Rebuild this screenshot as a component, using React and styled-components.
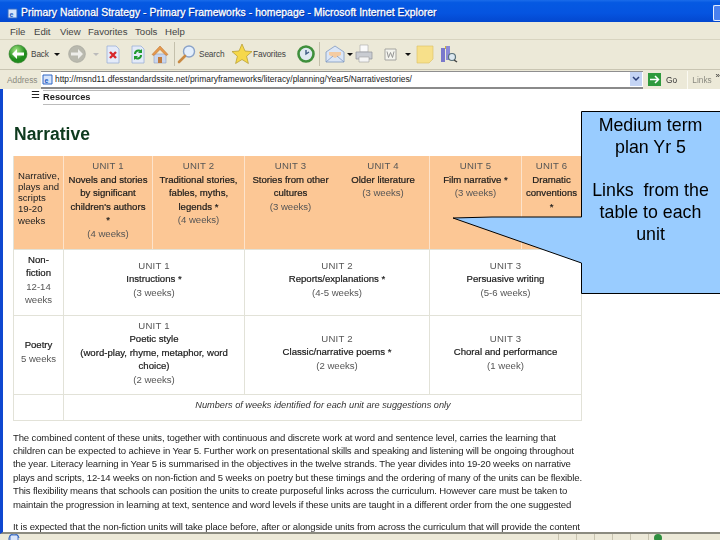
import React from 'react';
import styled, { createGlobalStyle } from 'styled-components';

const Global = createGlobalStyle`
  html, body { margin: 0; padding: 0; background: #fff; }
  body { width: 720px; height: 540px; overflow: hidden; font-family: "Liberation Sans", Arial, sans-serif; }
`;
const Stage = styled.div`position: relative; width: 720px; height: 540px; overflow: hidden;`;
const Browser = styled.div`
  width: 720px; height: 540px; display: flex; flex-direction: column;
  background: #ece9d8; filter: blur(0.45px);
`;
const TitleBar = styled.div`
  height: 22px; flex: none; box-sizing: border-box; display: flex; align-items: center; gap: 2px; padding: 3px 0 0 7px;
  background: linear-gradient(#1a6cea 0, #0559e2 12%, #0554e0 60%, #0347cf 100%);
  color: #fff; font-size: 10.4px; letter-spacing: 0.03px; white-space: nowrap;
`;
const TitleText = styled.span`flex: 1; text-shadow: 1px 1px 0 #0a2f9a; -webkit-text-stroke: 0.3px #fff;`;
const CloseEdge = styled.span`width: 6px; height: 14px; background: #4a80ee; border: 1px solid #e6eefc; border-right: 0; border-radius: 2px 0 0 2px;`;
const MenuBar = styled.div`
  height: 18px; flex: none; display: flex; align-items: center; color: #444; font-size: 9.6px; padding-top: 1px;
  border-bottom: 1px solid #d8d4c0; box-sizing: border-box;
`;
const MenuItem = styled.span`width: ${p => p.$w}px; flex: none; &:first-child { margin-left: 10px; }`;
const Toolbar = styled.div`
  height: 30px; flex: none; display: flex; align-items: center; color: #444; font-size: 8.3px;
  border-bottom: 1px solid #c9c5b2; box-sizing: border-box; padding: 0 0 1px 7px;
`;
const Tool = styled.span`display: inline-flex; align-items: center; flex: none; margin-left: ${p => p.$ml || 0}px; white-space: nowrap; gap: ${p => p.$gap || 0}px;`;
const ToolText = styled.span`width: ${p => p.$w}px; flex: none; letter-spacing: -0.15px;`;
const Sep = styled.span`width: 1px; height: 24px; background: #c4c0ac; flex: none; margin-left: ${p => p.$ml || 0}px;`;
const Caret = styled.span`
  width: 0; height: 0; flex: none; margin-left: ${p => p.$ml || 0}px;
  border-left: 3px solid transparent; border-right: 3px solid transparent; border-top: 3px solid ${p => p.$c || '#111'};
`;
const AddressBar = styled.div`
  height: 19px; flex: none; display: flex; align-items: center; font-size: 8.3px; color: #8a8a80;
  box-sizing: border-box; padding-left: 7px;
`;
const AddressLabel = styled.span`width: 34px; flex: none;`;
const UrlField = styled.div`
  width: 602px; height: 18px; flex: none; background: #fff; box-sizing: border-box; display: flex; align-items: center;
  border-top: 1px solid #8f8f8f; border-bottom: 2px solid #8a8a8a; padding: 0 1px 0 1px; color: #222; font-size: 8.42px;
`;
const UrlText = styled.span`flex: 1; white-space: nowrap; overflow: hidden; margin-left: 1px;`;
const DropBox = styled.span`width: 12px; height: 14px; background: #c4d4f4; flex: none; display: flex; align-items: center; justify-content: center;`;
const GoLabel = styled.span`color: #333; margin-left: 5px; width: 23px;`;
const BarDivider = styled.span`width: 1px; height: 18px; background: #fbfaf2; flex: none;`;
const LinksLabel = styled.span`margin-left: 4px; width: 25px;`;
const Chevron = styled.span`color: #222; font-size: 8px; margin-top: -8px;`;

const Content = styled.main`
  flex: 1; min-height: 0; overflow: hidden; background: #fff; color: #1c1c1c; font-size: 9.6px;
  border-left: 3px solid #0f47d0; box-sizing: border-box; padding: 1px 0 0 10px;
  border-bottom: 2px solid #8b8b80;
`;
const ResourceRow = styled.div`display: flex; align-items: flex-start; margin-left: 18px;`;
const MenuGlyph = styled.span`font-size: 10px; line-height: 9px; width: 12px; color: #222;`;
const ResourceBox = styled.div`
  width: 147px; height: 13px; border-top: 1px solid #bbb; border-bottom: 1px solid #bbb;
  font-size: 9.3px; font-weight: 700; line-height: 13px; color: #222;
`;
const Heading = styled.h1`
  margin: 19px 0 12px 1px; font-size: 17.5px; line-height: 20px; font-weight: 700; color: #0e3a1e;
`;
const Table = styled.table`
  border-collapse: collapse; table-layout: fixed; width: 568px; height: 264px; font-size: 9.6px; line-height: 13.5px;
  border-bottom: 1px solid #b5b5ad;
`;
const Cell = styled.td`
  box-sizing: border-box; padding: ${p => p.$pad ?? '3px 1px 0'}; text-align: ${p => p.$left ? 'left' : 'center'};
  vertical-align: ${p => p.$mid ? 'middle' : 'top'}; color: #222;
  background: ${p => p.$head ? '#fcc795' : '#fff'};
  line-height: ${p => p.$tight ? '11.3px' : 'inherit'};
  border-right: 1px solid ${p => p.$noline ? (p.$head ? '#fcc795' : '#fff') : (p.$head ? '#fde3cb' : '#e2e2d8')};
  border-bottom: 1px solid #e2e2d8;
  &:first-child { border-left: 1px solid #e2e2d8; }
`;
const Unit = styled.span`display: block; color: #555; letter-spacing: 0.2px;`;
const Topic = styled.span`display: block; color: #1a1a1a; -webkit-text-stroke: 0.2px #1a1a1a;`;
const Weeks = styled.span`display: block; color: #555;`;
const Note = styled.span`font-style: italic; color: #333; font-size: 9.2px;`;
const Para = styled.p`margin: 10px 0 0 0; width: 570px; font-size: 9.55px; letter-spacing: -0.14px; line-height: 13.4px; white-space: nowrap; color: #1e1e1e;`;
const NextPara = styled(Para)`margin-top: 9px;`;
const StatusBar = styled.div`
  height: 6px; flex: none; display: flex; background: #ece9d8; padding: 0 0 0 8px; overflow: hidden;
`;
const StatusPanes = styled.div`display: flex; margin-left: 538px;`;
const StatusPane = styled.span`width: 17px; height: 6px; border-left: 1px solid #c8c4b0; flex: none; display: flex; justify-content: center;`;
const Globe = styled.span`width: 8px; height: 8px; border-radius: 50%; background: #2f8f3f; flex: none;`;

const Callout = styled.aside`position: absolute; left: 453px; top: 111px; width: 267px; height: 183px;`;
const CalloutShape = styled.svg`display: block; position: absolute; inset: 0;`;
const CalloutText = styled.div`
  position: absolute; left: 128px; right: 0; top: 4px; text-align: center; color: #000;
  font-size: 17.8px; line-height: 21.7px;
`;

const I = ({ w = 22, h = 22, children }) => <svg width={w} height={h} viewBox="0 0 22 22">{children}</svg>;
const BackIcon = () => <I><defs><radialGradient id="g1" cx=".4" cy=".3"><stop offset="0" stopColor="#a4e684" /><stop offset="1" stopColor="#1f8c1c" /></radialGradient></defs><circle cx="11" cy="11" r="9" fill="url(#g1)" stroke="#2f7a28" strokeWidth=".6" /><path d="M5 11l5-5v3.500h7v3h-7V16z" fill="#fff" /></I>;
const ForwardIcon = () => <I><circle cx="11" cy="11" r="8.400" fill="#b9b9ae" stroke="#a2a29a" strokeWidth=".6" /><path d="M17 11l-5-5v3.500H5v3h7V16z" fill="#eeeeea" /></I>;
const StopIcon = () => <I><path d="M5 3h9l3 3v14H5z" fill="#e4ebf9" stroke="#9cb0d8" strokeWidth=".8" /><path d="M8 9l6 6m0-6l-6 6" stroke="#d8262a" strokeWidth="2.400" /></I>;
const RefreshIcon = () => <I><path d="M5 3h9l3 3v14H5z" fill="#e4ebf9" stroke="#9cb0d8" strokeWidth=".8" /><path d="M8 11a3.500 3.500 0 016-2.500M14 12a3.500 3.500 0 01-6 2.500" fill="none" stroke="#1f9a2f" strokeWidth="2" /><path d="M15 6v4h-4zM7 17v-4h4z" fill="#1f9a2f" /></I>;
const HomeIcon = () => <I><path d="M5 11h12v9H5z" fill="#c9d6ee" stroke="#8ea0c4" strokeWidth=".6" /><path d="M3 11.500L11 3l8 8.500-2 1-6-6-6 6z" fill="#e59a4c" stroke="#b9682a" strokeWidth=".5" /><path d="M9 14h4v6H9z" fill="#c07a3e" /></I>;
const SearchIcon = () => <I><circle cx="13" cy="8.500" r="5.500" fill="#e4effc" stroke="#8aa2c8" strokeWidth="1.400" /><path d="M9 13l-6 6" stroke="#c98a44" strokeWidth="2.600" strokeLinecap="round" /></I>;
const StarIcon = () => <I><path d="M11 1l3 7 7 .6-5.400 4.600 1.800 7.300L11 16.500l-6.400 4 1.800-7.300L1 8.600l7-.6z" fill="#f6d84a" stroke="#b39a2c" strokeWidth=".7" /></I>;
const HistoryIcon = () => <I><circle cx="11" cy="11" r="7.500" fill="#dfe9f2" stroke="#3f8f3c" strokeWidth="2.600" /><path d="M11 7v4l3-2" fill="none" stroke="#3c5a86" strokeWidth="1.400" /></I>;
const MailIcon = () => <I><path d="M2 9l9-6 9 6v10H2z" fill="#dbe6f6" stroke="#7f98c2" strokeWidth=".8" /><path d="M5 9h12v3l-6 3-6-3z" fill="#f4cba2" /><path d="M2 19l7-6M20 19l-7-6" stroke="#7f98c2" strokeWidth=".8" /></I>;
const PrintIcon = () => <I><path d="M7 2h8v7H7z" fill="#fafafa" stroke="#aaa" strokeWidth=".6" /><path d="M3 9h16v7H3z" fill="#c9ccd2" stroke="#8f939c" strokeWidth=".7" /><path d="M6 14h10v5H6z" fill="#f5f5f5" stroke="#a0a0a0" strokeWidth=".6" /></I>;
const WordIcon = () => <I><path d="M5 6h11v11H5z" fill="#f4f4ee" stroke="#a4a4a0" strokeWidth="1" /><path d="M7 8.500l1.500 6 2-5 2 5 1.500-6" fill="none" stroke="#8c8c8c" strokeWidth=".9" /></I>;
const NoteIcon = () => <I><path d="M3 3h16v13l-4 4H3z" fill="#f7e08a" stroke="#dcc062" strokeWidth=".6" /></I>;
const BooksIcon = () => <I><path d="M4 5h4v14H4z" fill="#7a78cc" /><path d="M9 3h4v14H9z" fill="#8c8ad6" /><path d="M8 3h1v3H8z" fill="#cdb23c" /><circle cx="15" cy="14" r="3.500" fill="#dce8f0" stroke="#59717a" strokeWidth="1.200" /><path d="M17 17l3 2" stroke="#444" strokeWidth="1.500" /></I>;
const PageIcon = () => <svg width="12" height="12" viewBox="0 0 12 12"><path d="M2 1h8v10H2z" fill="#dbe6fb" stroke="#4c77c8" /><path d="M1 6a5 5 0 0110-2" fill="none" stroke="#2d63c0" /></svg>;
const GoIcon = () => <svg width="13" height="13" viewBox="0 0 13 13"><rect width="13" height="13" fill="#2f9a3d" /><path d="M2 6.500h8M7 3l3.500 3.500L7 10" fill="none" stroke="#fff" strokeWidth="1.500" /></svg>;
const IeGlyph = () => <svg width="12" height="12" viewBox="0 0 12 12"><path d="M1 2h9v9H1z" fill="#d6e4fb" stroke="#2f66c4" /><text x="2.500" y="9.500" fontSize="7" fontWeight="700" fill="#205bc0" fontFamily="Liberation Sans">e</text></svg>;
const DropArrow = () => <svg width="8" height="6" viewBox="0 0 8 6"><path d="M1 1l3 3 3-3" fill="none" stroke="#2a3f78" strokeWidth="1.500" /></svg>;

const U = ({ unit, topic, weeks, star }) => (
  <>
    <Unit>{unit}</Unit>
    {topic.map(t => <Topic key={t}>{t}</Topic>)}
    {star && <Topic>*</Topic>}
    {weeks && <Weeks>{weeks}</Weeks>}
  </>
);

export default function App() {
  return (
    <Stage>
      <Global />
      <Browser>
        <TitleBar>
          <IeGlyph />
          <TitleText>Primary National Strategy - Primary Frameworks - homepage - Microsoft Internet Explorer</TitleText>
          <CloseEdge />
        </TitleBar>
        <MenuBar>
          <MenuItem $w={24}>File</MenuItem><MenuItem $w={26}>Edit</MenuItem><MenuItem $w={28}>View</MenuItem>
          <MenuItem $w={47}>Favorites</MenuItem><MenuItem $w={30}>Tools</MenuItem><MenuItem $w={30}>Help</MenuItem>
        </MenuBar>
        <Toolbar>
          <Tool $gap={2}><BackIcon /><ToolText $w={16}>Back</ToolText></Tool>
          <Caret $ml={7} />
          <Tool $ml={6}><ForwardIcon /></Tool>
          <Caret $ml={5} $c="#bbb" />
          <Tool $ml={3}><StopIcon /></Tool>
          <Tool $ml={3}><RefreshIcon /></Tool>
          <Tool><HomeIcon /></Tool>
          <Sep $ml={3} />
          <Tool $ml={1} $gap={1}><SearchIcon /><ToolText $w={25}>Search</ToolText></Tool>
          <Tool $ml={7}><StarIcon /><ToolText $w={34}>Favorites</ToolText></Tool>
          <Tool $ml={8}><HistoryIcon /></Tool>
          <Sep $ml={2} />
          <Tool $ml={4}><MailIcon /></Tool>
          <Caret $ml={1} />
          <Tool><PrintIcon /></Tool>
          <Tool $ml={5}><WordIcon /></Tool>
          <Caret $ml={3} />
          <Tool $ml={3}><NoteIcon /></Tool>
          <Tool $ml={1}><BooksIcon /></Tool>
        </Toolbar>
        <AddressBar>
          <AddressLabel>Address</AddressLabel>
          <UrlField>
            <IeGlyph />
            <UrlText>http://msnd11.dfesstandardssite.net/primaryframeworks/literacy/planning/Year5/Narrativestories/</UrlText>
            <DropBox><DropArrow /></DropBox>
          </UrlField>
          <Tool $ml={5}><GoIcon /></Tool>
          <GoLabel>Go</GoLabel>
          <BarDivider />
          <LinksLabel>Links</LinksLabel>
          <Chevron>»</Chevron>
        </AddressBar>
        <Content>
          <ResourceRow>
            <MenuGlyph>☰</MenuGlyph>
            <ResourceBox>Resources</ResourceBox>
          </ResourceRow>
          <Heading>Narrative</Heading>
          <Table>
            <colgroup>
              {[50, 89, 92, 92, 93, 92, 60].map((w, i) => <col key={i} width={w} />)}
            </colgroup>
            <tbody>
              <tr style={{ height: 93 }}>
                <Cell $head $left $mid $tight $pad="0 2px 9px 4px">Narrative, plays and scripts 19-20 weeks</Cell>
                <Cell $head><U unit="UNIT 1" topic={['Novels and stories', 'by significant', "children's authors"]} star weeks="(4 weeks)" /></Cell>
                <Cell $head><U unit="UNIT 2" topic={['Traditional stories,', 'fables, myths,', 'legends *']} weeks="(4 weeks)" /></Cell>
                <Cell $head $noline><U unit="UNIT 3" topic={['Stories from other', 'cultures']} weeks="(3 weeks)" /></Cell>
                <Cell $head><U unit="UNIT 4" topic={['Older literature']} weeks="(3 weeks)" /></Cell>
                <Cell $head><U unit="UNIT 5" topic={['Film narrative *']} weeks="(3 weeks)" /></Cell>
                <Cell $head $noline><U unit="UNIT 6" topic={['Dramatic', 'conventions']} star /></Cell>
              </tr>
              <tr style={{ height: 66 }}>
                <Cell $pad="3px 1px 0"><Topic>Non-</Topic><Topic>fiction</Topic><Weeks>12-14</Weeks><Weeks>weeks</Weeks></Cell>
                <Cell colSpan={2} $pad="9px 1px 0"><U unit="UNIT 1" topic={['Instructions *']} weeks="(3 weeks)" /></Cell>
                <Cell colSpan={2} $pad="9px 1px 0"><U unit="UNIT 2" topic={['Reports/explanations *']} weeks="(4-5 weeks)" /></Cell>
                <Cell colSpan={2} $pad="9px 1px 0"><U unit="UNIT 3" topic={['Persuasive writing']} weeks="(5-6 weeks)" /></Cell>
              </tr>
              <tr style={{ height: 79 }}>
                <Cell $mid $pad="0 1px 6px"><Topic>Poetry</Topic><Weeks>5 weeks</Weeks></Cell>
                <Cell colSpan={2}><U unit="UNIT 1" topic={['Poetic style', '(word-play, rhyme, metaphor, word', 'choice)']} weeks="(2 weeks)" /></Cell>
                <Cell colSpan={2} $pad="16px 1px 0"><U unit="UNIT 2" topic={['Classic/narrative poems *']} weeks="(2 weeks)" /></Cell>
                <Cell colSpan={2} $pad="16px 1px 0"><U unit="UNIT 3" topic={['Choral and performance']} weeks="(1 week)" /></Cell>
              </tr>
              <tr style={{ height: 26 }}>
                <Cell />
                <Cell colSpan={6} $pad="3px 0 0 1px"><Note>Numbers of weeks identified for each unit are suggestions only</Note></Cell>
              </tr>
            </tbody>
          </Table>
          <Para>
            The combined content of these units, together with continuous and discrete work at word and sentence level, carries the learning that<br />
            children can be expected to achieve in Year 5. Further work on presentational skills and speaking and listening will be ongoing throughout<br />
            the year. Literacy learning in Year 5 is summarised in the objectives in the twelve strands. The year divides into 19-20 weeks on narrative<br />
            plays and scripts, 12-14 weeks on non-fiction and 5 weeks on poetry but these timings and the ordering of many of the units can be flexible.<br />
            This flexibility means that schools can position the units to create purposeful links across the curriculum. However care must be taken to<br />
            maintain the progression in learning at text, sentence and word levels if these units are taught in a different order from the one suggested
          </Para>
          <NextPara>It is expected that the non-fiction units will take place before, after or alongside units from across the curriculum that will provide the content</NextPara>
        </Content>
        <StatusBar>
          <PageIcon />
          <StatusPanes>
            {[0, 1, 2, 3, 4].map(i => <StatusPane key={i} />)}
            <StatusPane><Globe /></StatusPane>
          </StatusPanes>
        </StatusBar>
      </Browser>
      <Callout>
        <CalloutShape width="267" height="183" viewBox="0 0 267 183">
          <path d="M267 .5H128.500V106H39L0 107l128.500 45V182.500H267" fill="#99ccff" stroke="#000" strokeWidth="1" />
        </CalloutShape>
        <CalloutText>Medium term<br />plan Yr 5<br /><br />Links&nbsp; from the<br />table to each<br />unit</CalloutText>
      </Callout>
    </Stage>
  );
}
